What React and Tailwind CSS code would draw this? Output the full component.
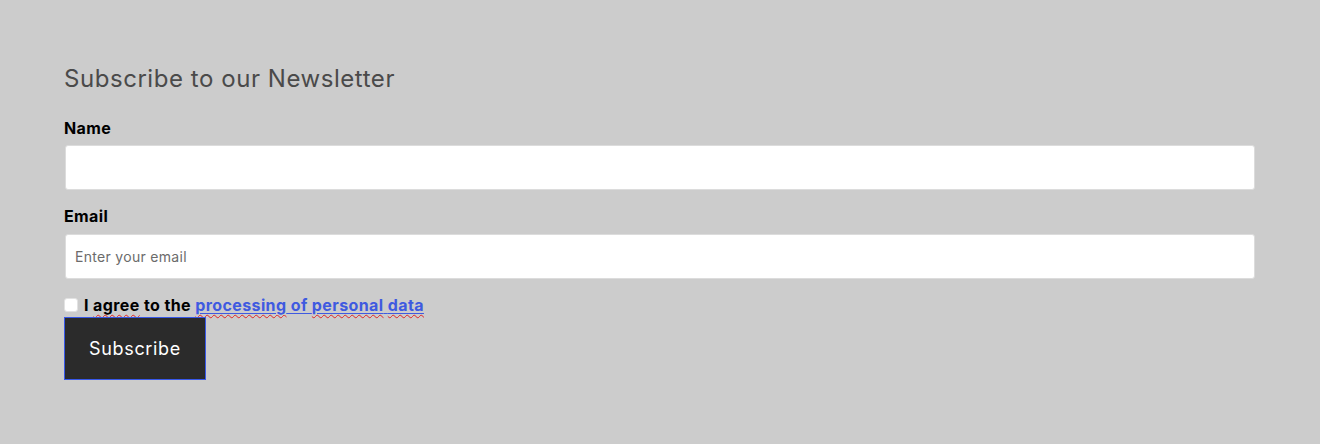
export default function App() {
  const squiggle = 'underline decoration-wavy decoration-[#e02424] decoration-1 underline-offset-[3px]';
  return (
    <div className="min-h-[444px] w-full bg-[#cccccc] font-['Inter','Noto_Sans',sans-serif]">
      <form className="flex flex-col pl-[64px] pr-[65px] pt-16" onSubmit={(e) => e.preventDefault()}>
        <h2 className="text-[24px] leading-[29px] font-normal tracking-[0.55px] text-[#4a4a4a]">
          Subscribe to our Newsletter
        </h2>

        <label className="mt-[23px] text-[16px] leading-6 font-bold tracking-[0.4px] text-black">Name</label>
        <input
          type="text"
          className="mt-[5px] ml-px h-[45px] rounded-[3px] border border-[#dcdcdc] bg-white px-[9px] text-[14px] outline-none"
        />

        <label className="mt-[14px] text-[16px] leading-6 font-bold tracking-[0.4px] text-black">Email</label>
        <input
          type="email"
          placeholder="Enter your email"
          className="mt-[6px] ml-px h-[45px] rounded-[3px] border border-[#dcdcdc] bg-white px-[9px] text-[14px] tracking-[0.3px] text-[#333] placeholder:text-[#6b6b6b] outline-none"
        />

        <div className="mt-[14px] flex h-6 items-center gap-[6px]">
          <span className="h-[14px] w-[14px] rounded-[3px] border border-[#e2e2e2] bg-white" />
          <span className="text-[16px] leading-6 font-bold tracking-[0.4px] text-black">
            I <span className={squiggle}>agree</span> to the{' '}
            <a href="#" className="text-[#3f5ae0] underline decoration-[#3f5ae0] underline-offset-2">
              <span className={squiggle}>processing</span> of <span className={squiggle}>personal</span>{' '}
              <span className={squiggle}>data</span>
            </a>
          </span>
        </div>

        <button
          type="submit"
          className="h-[63px] w-[142px] border border-[#3858e9] bg-[#2b2b2b] text-[18px] font-normal tracking-[0.65px] text-white"
        >
          Subscribe
        </button>
      </form>
    </div>
  );
}
